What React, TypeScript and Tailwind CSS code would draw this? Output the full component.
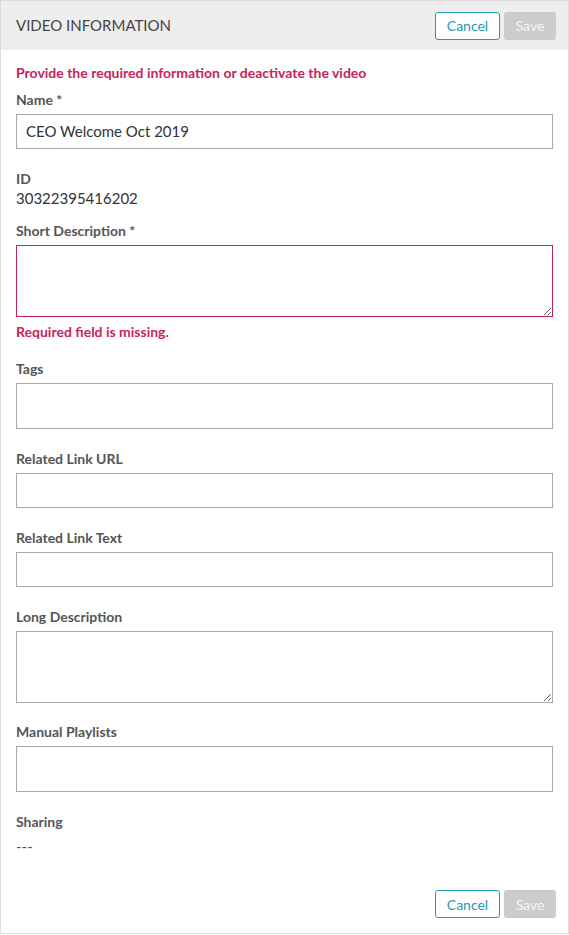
import type { ReactNode } from 'react';

const labelCls = 'block text-[14px] leading-[20px] font-bold text-[#555]';
const boxCls = 'block w-full border border-[#aaa] bg-white';

function Buttons() {
  return (
    <div className="flex items-center gap-1">
      <button className="h-[28px] w-[65px] rounded-[3px] border border-[#1b9bb4] bg-white text-[14px] text-[#1b9bb4]">
        Cancel
      </button>
      <button className="h-[28px] w-[52px] rounded-[3px] bg-[#cccccc] text-[14px] text-[#f4f4f4]">
        Save
      </button>
    </div>
  );
}

function Field({ label, children, className = '' }: { label: string; children: ReactNode; className?: string }) {
  return (
    <div className={className}>
      <label className={labelCls}>{label}</label>
      <div className="mt-[4px]">{children}</div>
    </div>
  );
}

export default function App() {
  return (
    <div className="w-[569px] h-[935px] bg-white" style={{ fontFamily: 'Lato, "Open Sans", sans-serif' }}>
      <div className="h-[934px] border border-[#dcdcdc] flex flex-col">
        {/* Header */}
        <header className="h-[49px] bg-[#eeeeee] flex items-center justify-between pl-[15px] pr-[12px]">
          <h1 className="text-[15px] text-[#444]">VIDEO INFORMATION</h1>
          <Buttons />
        </header>

        <div className="px-[15px] pt-[13px] flex-1">
          <p className="text-[14px] leading-[20px] font-bold text-[#c8235a]">
            Provide the required information or deactivate the video
          </p>

          <Field label="Name *" className="mt-[7px]">
            <div className={`${boxCls} h-[35px] flex items-center px-[9px] text-[15px] text-[#333]`}>
              CEO Welcome Oct 2019
            </div>
          </Field>

          <div className="mt-[20px]">
            <div className={labelCls}>ID</div>
            <div className="text-[15px] leading-[19px] text-[#333]">30322395416202</div>
          </div>

          <Field label="Short Description *" className="mt-[13px]">
            <textarea className="block w-full h-[72px] border border-[#c8235a] resize-y outline-none" />
          </Field>
          <p className="mt-[5px] text-[14px] leading-[20px] font-bold text-[#c8235a]">Required field is missing.</p>

          <Field label="Tags" className="mt-[17px]">
            <div className={`${boxCls} h-[46px]`} />
          </Field>

          <Field label="Related Link URL" className="mt-[20px]">
            <div className={`${boxCls} h-[35px]`} />
          </Field>

          <Field label="Related Link Text" className="mt-[20px]">
            <div className={`${boxCls} h-[35px]`} />
          </Field>

          <Field label="Long Description" className="mt-[20px]">
            <textarea className="block w-full h-[72px] border border-[#aaa] resize-y outline-none" />
          </Field>

          <Field label="Manual Playlists" className="mt-[19px]">
            <div className={`${boxCls} h-[46px]`} />
          </Field>

          <div className="mt-[20px]">
            <div className={labelCls}>Sharing</div>
            <div className="mt-[4px] text-[15px] leading-[20px] text-[#555]">---</div>
          </div>

          <div className="mt-[34px] flex justify-end">
            <div className="mr-[-3px]">
              <Buttons />
            </div>
          </div>
        </div>
      </div>
    </div>
  );
}
